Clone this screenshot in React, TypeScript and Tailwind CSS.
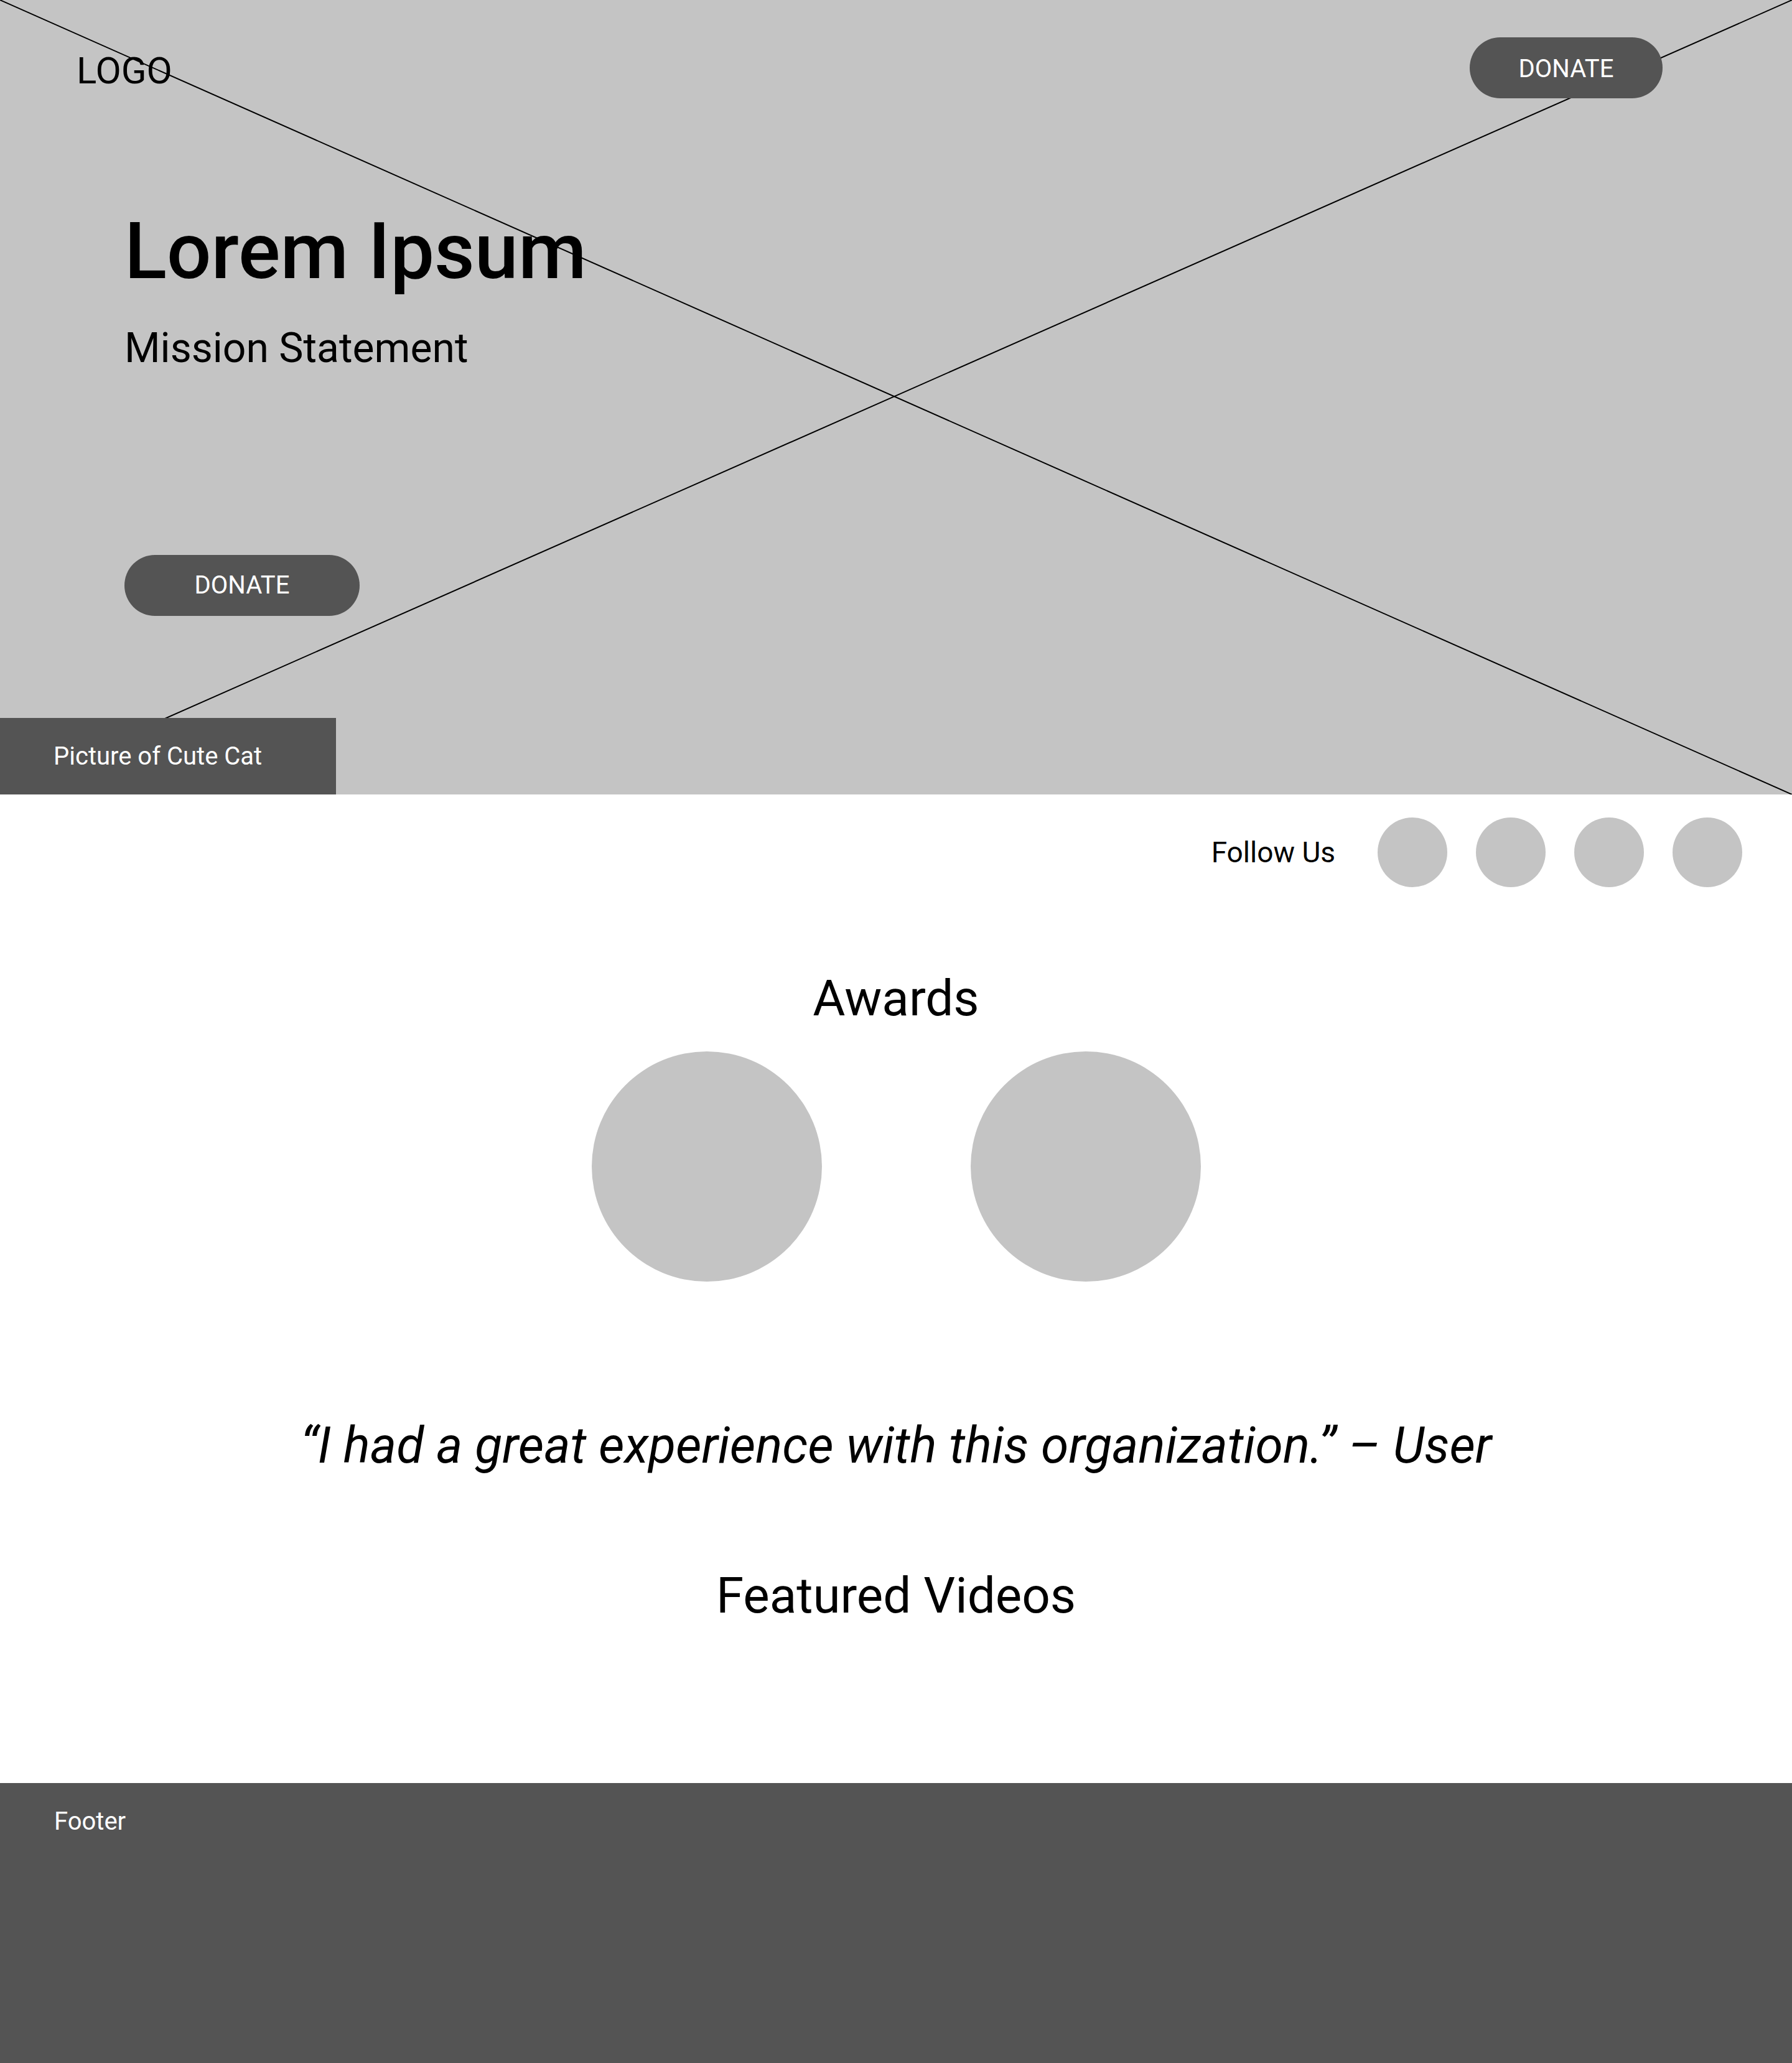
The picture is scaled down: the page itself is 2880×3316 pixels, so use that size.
import React from "react";

export default function App() {
  const font = { fontFamily: "Roboto, 'Noto Sans', sans-serif" };
  return (
    <div className="w-[2880px] bg-white text-black" style={font}>
      {/* Hero */}
      <section className="relative h-[1277px] bg-[#c4c4c4] flex flex-col overflow-hidden">
        <svg
          className="absolute inset-0 w-full h-full pointer-events-none"
          viewBox="0 0 2880 1277"
          preserveAspectRatio="none"
        >
          <line x1="0" y1="0" x2="2880" y2="1277" stroke="#000" strokeWidth="2" />
          <line x1="2880" y1="0" x2="0" y2="1272" stroke="#000" strokeWidth="2" />
        </svg>

        <div className="relative flex justify-between items-start pl-[123px] pr-[208px] pt-[60px]">
          <div className="mt-[24px] text-[60px] leading-none">LOGO</div>
          <button className="w-[310px] h-[98px] pt-[4px] rounded-full bg-[#545454] text-white text-[40px] leading-none flex items-center justify-center">
            DONATE
          </button>
        </div>

        <div className="relative pl-[200px] flex flex-col items-start">
          <h1 className="mt-[183px] text-[126px] leading-none font-medium">Lorem Ipsum</h1>
          <p className="mt-[60px] text-[66px] leading-none">Mission Statement</p>
          <button className="mt-[299px] w-[378px] h-[98px] rounded-full bg-[#545454] text-white text-[40px] leading-none flex items-center justify-center">
            DONATE
          </button>
        </div>

        <div className="relative mt-auto w-[540px] h-[123px] bg-[#545454] text-white text-[40px] leading-none flex items-center pl-[86px]">
          Picture of Cute Cat
        </div>
      </section>

      {/* Follow row */}
      <div className="flex justify-end items-center pr-[80px] mt-[37px]">
        <span className="text-[46px] leading-none mr-[68px]">Follow Us</span>
        <div className="flex gap-[46px]">
          <div className="w-[112px] h-[112px] rounded-full bg-[#c4c4c4]" />
          <div className="w-[112px] h-[112px] rounded-full bg-[#c4c4c4]" />
          <div className="w-[112px] h-[112px] rounded-full bg-[#c4c4c4]" />
          <div className="w-[112px] h-[112px] rounded-full bg-[#c4c4c4]" />
        </div>
      </div>

      {/* Awards */}
      <section className="flex flex-col items-center mt-[139px]">
        <h2 className="text-[80px] leading-none">Awards</h2>
        <div className="mt-[45px] flex gap-[239px]">
          <div className="w-[370px] h-[370px] rounded-full bg-[#c4c4c4]" />
          <div className="w-[370px] h-[370px] rounded-full bg-[#c4c4c4]" />
        </div>
      </section>

      {/* Quote */}
      <p className="mt-[224px] text-center italic text-[80.5px] leading-none">
        “I had a great experience with this organization.” – User
      </p>

      {/* Featured videos */}
      <h2 className="mt-[160px] text-center text-[80px] leading-none">Featured Videos</h2>

      {/* Footer */}
      <footer className="mt-[261px] h-[450px] bg-[#545454] text-white pl-[87px] pt-[42px]">
        <div className="text-[40px] leading-none">Footer</div>
      </footer>
    </div>
  );
}
